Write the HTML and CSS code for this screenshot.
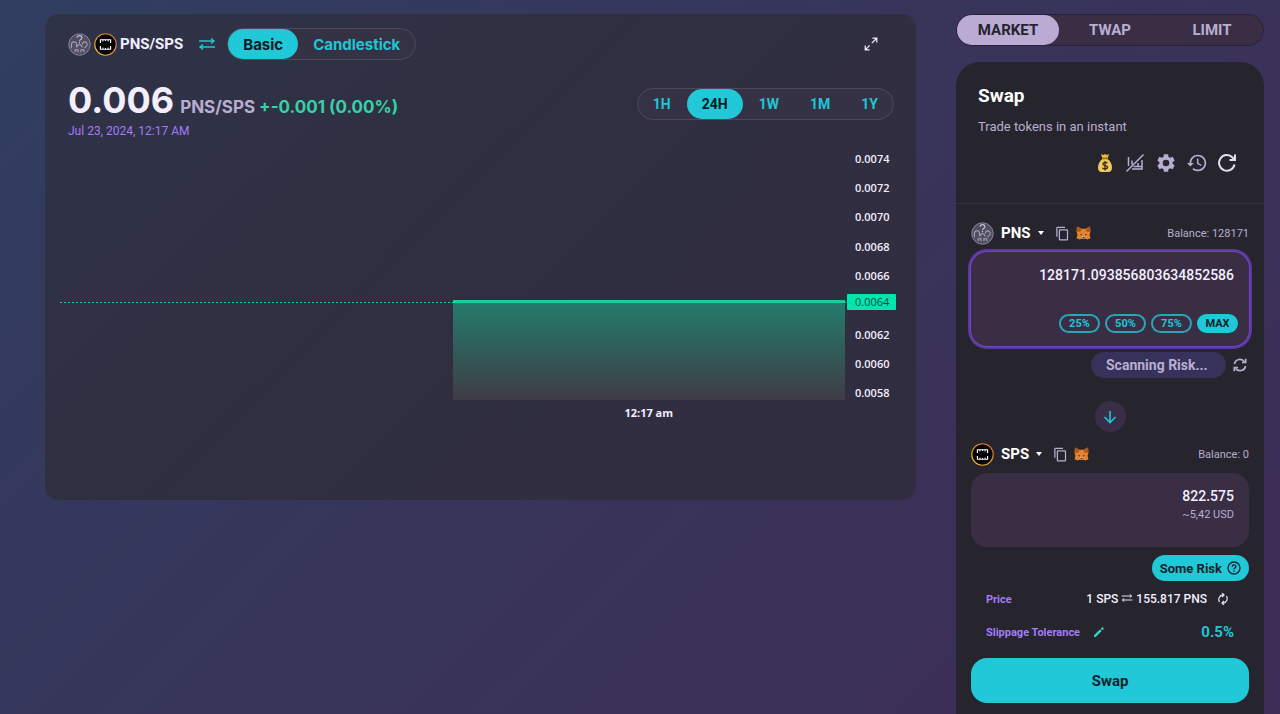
FILE: index.html
```html
<!DOCTYPE html>
<html lang="en">
<head>
  <meta charset="UTF-8">
  <meta name="viewport" content="width=device-width, initial-scale=1.0">
  <title>Swap PNS/SPS</title>
  <link rel="stylesheet" href="styles.css">
</head>
<body>
  <!-- shared icons -->
  <svg class="sprite" aria-hidden="true">
    <symbol id="pns" viewBox="0 0 24 24">
      <circle cx="12" cy="12" r="11.2" fill="#514e62" stroke="#8d889e" stroke-width="1"/>
      <g fill="none" stroke="#aaa4bb" stroke-width="1.100">
        <path d="M9.500 5c0-3 5-3 5 0 0 2-2.500 1.500-2.500 3.500M12 9.500v1.300" stroke="#c9c4d6"/>
        <path d="M3.500 16v-3.500c0-4.500 5.500-4.500 5.500-.5v3M15 12c0-4 5.500-3.500 5 .5-.3 1.500-2.500 1.500-2.500 3.500M9 15c1-2.500 2-3 3-3s2 .5 3 3"/>
        <path d="M7.500 20v-2.500h3V20M13.500 20v-2.500h3V20"/>
      </g>
    </symbol>
    <symbol id="sps" viewBox="0 0 24 24">
      <linearGradient id="ring" x1="1" y1="0" x2="0" y2="1"><stop offset="0" stop-color="#e06b2b"/><stop offset="1" stop-color="#f0c02c"/></linearGradient>
      <circle cx="12" cy="12" r="11.2" fill="#050507" stroke="url(#ring)" stroke-width="1.200"/>
      <path d="M6.700 10.500V7h10.600v3.500M6.700 13.500V17h10.600v-3.500" fill="none" stroke="#fff" stroke-width="1.200"/>
      <path d="M9.300 7v1.800M12 7v1.300M14.700 7v1.800M9.300 17v-1.800M12 17v-1.300M14.700 17v-1.800" stroke="#fff" stroke-width="1"/>
    </symbol>
    <symbol id="swap" viewBox="0 0 18 14">
      <path d="M1 4h15M13 1.500 16 4l-3 2.500M17 10H2M5 7.500 2 10l3 2.500" fill="none" stroke="currentColor" stroke-width="1.400"/>
    </symbol>
    <symbol id="copy" viewBox="0 0 24 24">
      <path d="M16 1H4a2 2 0 0 0-2 2v14h2V3h12V1zm3 4H8a2 2 0 0 0-2 2v14c0 1.100.9 2 2 2h11a2 2 0 0 0 2-2V7a2 2 0 0 0-2-2zm0 16H8V7h11v14z" fill="currentColor"/>
    </symbol>
    <symbol id="fox" viewBox="0 0 32 30">
      <path d="M2 1l10 5h8l10-5 1 10-2 8 2 7-7 3-5-2h-6l-5 2-7-3 2-7-2-8z" fill="#e8832a"/>
      <path d="M2 1l10 5-2 6-7 1-1-3zM30 1L20 6l2 6 7 1 1-3z" fill="#a85a20"/>
      <path d="M8 17l5 1-1 3zM24 17l-5 1 1 3z" fill="#2b303c"/>
      <path d="M12 22h8l-1 5h-6z" fill="#c9c0b8"/>
      <path d="M13.500 23.500h5l-1 2h-3z" fill="#22222c"/>
    </symbol>
  </svg>

  <div class="page">
    <main class="chart-card">
      <header class="chart-top">
        <div class="pair">
          <svg class="token-icon"><use href="#pns"/></svg>
          <svg class="token-icon"><use href="#sps"/></svg>
          <span>PNS/SPS</span>
        </div>
        <button class="icon-btn flip" aria-label="Flip pair"><svg width="18" height="14"><use href="#swap"/></svg></button>
        <div class="pills">
          <button class="active">Basic</button>
          <button>Candlestick</button>
        </div>
        <button class="icon-btn expand" aria-label="Expand chart">
          <svg width="14" height="14" viewBox="0 0 14 14" fill="none" stroke="currentColor" stroke-width="1.200"><path d="M8.500 1.200h4.300v4.300M12.500 1.500l-4.700 4.700M5.500 12.800H1.200V8.500M1.500 12.500l4.200-4.200"/></svg>
        </button>
      </header>

      <section class="summary">
        <div>
          <p class="price"><span class="amount">0.006</span><span class="unit">PNS/SPS</span><span class="change">+-0.001 (0.00%)</span></p>
          <p class="date">Jul 23, 2024, 12:17 AM</p>
        </div>
        <div class="pills range">
          <button>1H</button>
          <button class="active">24H</button>
          <button>1W</button>
          <button>1M</button>
          <button>1Y</button>
        </div>
      </section>

      <section class="chart">
        <div class="plot">
          <div class="area"></div>
          <span class="time">12:17 am</span>
        </div>
        <div class="axis">
          <span>0.0074</span>
          <span>0.0072</span>
          <span>0.0070</span>
          <span>0.0068</span>
          <span>0.0066</span>
          <span></span>
          <span>0.0062</span>
          <span>0.0060</span>
          <span>0.0058</span>
        </div>
        <div class="marker"><span>0.0064</span></div>
      </section>
    </main>

    <aside class="side">
      <nav class="modes">
        <button class="active">MARKET</button>
        <button>TWAP</button>
        <button>LIMIT</button>
      </nav>

      <div class="panel">
        <header class="panel-head">
          <h1>Swap</h1>
          <p>Trade tokens in an instant</p>
          <div class="tools">
            <button class="icon-btn" aria-label="Liquidity">
              <svg width="20" height="20" viewBox="0 0 20 20">
                <path d="M6 1l2.300 1L10 1l1.700 1L14 1l-1.200 4H7.200z" fill="#e9b83d"/>
                <path d="M7.500 6h5c2.500 2 4.500 4.500 4.500 8.500 0 3-1.500 4.500-3.500 4.500h-7C4.500 19 3 17.500 3 14.500 3 10.500 5 8 7.500 6z" fill="#f0c95c"/>
                <path d="M6.800 5.500h6.400" stroke="#9b6418" stroke-width="1.500"/>
                <path d="M12.500 10.200c-.6-1-4.700-1.300-4.700.8 0 2.200 4.800.9 4.800 3.200 0 2-4.200 1.900-5.200.6M10 8v9.500" fill="none" stroke="#3c2c18" stroke-width="1.300"/>
              </svg>
            </button>
            <button class="icon-btn" aria-label="Hide chart">
              <svg width="20" height="20" viewBox="0 0 20 20" fill="none" stroke="currentColor" stroke-width="1.500"><path d="M3.500 4v9M7 7.500v4M13 10v4M17 7v9H7M8.500 13.500H17M1.500 18.500l17-17"/></svg>
            </button>
            <button class="icon-btn" aria-label="Settings">
              <svg width="22" height="22" viewBox="0 0 24 24" fill="currentColor"><path d="M19.140 12.940c.04-.3.06-.61.06-.94s-.02-.64-.07-.94l2.030-1.580c.18-.14.23-.41.12-.61l-1.920-3.320c-.12-.22-.37-.29-.59-.22l-2.390.96c-.5-.38-1.030-.7-1.620-.94l-.36-2.540A.48.480 0 0 0 13.920 2.400h-3.840c-.24 0-.43.17-.47.41l-.36 2.540c-.59.24-1.130.57-1.620.94l-2.390-.96c-.22-.08-.47 0-.59.22L2.740 8.870c-.12.21-.08.47.12.61l2.030 1.580c-.05.3-.09.63-.09.94s.02.64.07.94l-2.030 1.580c-.18.14-.23.41-.12.61l1.920 3.320c.12.22.37.29.59.22l2.390-.96c.5.38 1.030.7 1.620.94l.36 2.540c.05.24.24.41.48.41h3.840c.24 0 .44-.17.47-.41l.36-2.540c.59-.24 1.130-.56 1.620-.94l2.390.96c.22.08.47 0 .59-.22l1.920-3.320c.12-.22.07-.47-.12-.61zM12 15.600a3.600 3.600 0 1 1 0-7.200 3.600 3.600 0 0 1 0 7.200z"/></svg>
            </button>
            <button class="icon-btn" aria-label="History">
              <svg width="20" height="20" viewBox="0 0 24 24" fill="currentColor"><path d="M13 2A10 10 0 0 0 3 12H0l4 4.200L8.200 12H5A8 8 0 1 1 7.800 18l-1.400 1.500A10 10 0 1 0 13 2zM12 7v5.800l4.800 2.900.9-1.400-4-2.400V7z"/></svg>
            </button>
            <button class="icon-btn light" aria-label="Refresh">
              <svg width="20" height="20" viewBox="0 0 20 20" fill="none" stroke="currentColor" stroke-width="2"><path d="M17.500 11.500A7.800 7.800 0 1 1 15.500 4.500l2 2"/><path d="M18 1.500V7h-5.500"/></svg>
            </button>
          </div>
        </header>

        <section class="trade">
          <div class="token-row">
            <button class="token"><svg class="token-icon"><use href="#pns"/></svg>PNS<i class="caret"></i></button>
            <button class="icon-btn" aria-label="Copy PNS address"><svg width="15" height="15"><use href="#copy"/></svg></button>
            <button class="icon-btn" aria-label="Add PNS to wallet"><svg width="15" height="14"><use href="#fox"/></svg></button>
            <span class="balance">Balance: 128171</span>
          </div>
          <div class="box box-in">
            <input type="text" aria-label="Amount of PNS" value="128171.093856803634852586">
            <div class="percents">
              <button>25%</button>
              <button>50%</button>
              <button>75%</button>
              <button class="active">MAX</button>
            </div>
          </div>

          <div class="scan">
            <span class="scan-pill">Scanning Risk...</span>
            <button class="icon-btn" aria-label="Scan again">
              <svg width="14" height="14" viewBox="0 0 14 14" fill="none" stroke="currentColor" stroke-width="1.700"><path d="M1.500 6A5.500 5.500 0 0 1 11.500 3.800M12.500 8a5.500 5.500 0 0 1-10 2.200"/><path d="M12.700.8v3.700H9M1.300 13.200V9.500H5"/></svg>
            </button>
          </div>

          <button class="switch" aria-label="Switch tokens">
            <svg width="14" height="14" viewBox="0 0 14 14" fill="none" stroke="currentColor" stroke-width="1.600"><path d="M7 1v11.500M1.500 7 7 12.500 12.500 7"/></svg>
          </button>

          <div class="token-row">
            <button class="token"><svg class="token-icon"><use href="#sps"/></svg>SPS<i class="caret"></i></button>
            <button class="icon-btn" aria-label="Copy SPS address"><svg width="15" height="15"><use href="#copy"/></svg></button>
            <button class="icon-btn" aria-label="Add SPS to wallet"><svg width="15" height="14"><use href="#fox"/></svg></button>
            <span class="balance">Balance: 0</span>
          </div>
          <div class="box box-out">
            <input type="text" aria-label="Amount of SPS" value="822.575">
            <p>~5,42 USD</p>
          </div>

          <button class="risk">Some Risk
            <svg width="14" height="14" viewBox="0 0 14 14" fill="none" stroke="currentColor" stroke-width="1.300"><circle cx="7" cy="7" r="6"/><path d="M5.200 5.700c0-2.500 3.700-2.300 3.700-.2C8.900 6.800 7 6.800 7 8.500M7 9.500v1.300"/></svg>
          </button>

          <div class="info">
            <span class="label">Price</span>
            <span class="rate">1 SPS <svg width="12" height="10"><use href="#swap"/></svg> 155.817 PNS</span>
            <button class="icon-btn light" aria-label="Invert price">
              <svg width="12" height="12" viewBox="0 0 12 12" fill="none" stroke="currentColor" stroke-width="1.300"><path d="M2.500 9A4.500 4.500 0 0 1 6 2M9.500 3A4.500 4.500 0 0 1 6 10"/><path d="M5 0l2 2-2 2M7 8l-2 2 2 2"/></svg>
            </button>
          </div>
          <div class="info">
            <span class="label">Slippage Tolerance</span>
            <button class="icon-btn edit" aria-label="Edit slippage">
              <svg width="10" height="10" viewBox="0 0 10 10" fill="currentColor"><path d="M0 8.300l6-6L7.700 4l-6 6H0zM6.700 1.600L8.300 0 10 1.700 8.400 3.300z"/></svg>
            </button>
            <span class="slippage">0.5%</span>
          </div>
          <button class="submit">Swap</button>
        </section>
      </div>
    </aside>
  </div>
</body>
</html>
```
FILE: styles.css
```css
* {
  box-sizing: border-box;
}

body {
  margin: 0;
  font-family: Roboto, "Liberation Sans", sans-serif;
  color: #f4eeff;
  background: linear-gradient(135deg, #303e60 0%, #38345a 50%, #3e2d56 100%);
}

h1, p {
  margin: 0;
}

button, input {
  font-family: inherit;
  padding: 0;
  border: none;
  background: none;
}

button {
  cursor: pointer;
}

.sprite {
  position: absolute;
  width: 0;
  height: 0;
}

.page {
  display: flex;
  gap: 40px;
  min-height: 100vh;
  padding: 14px 16px 0 45px;
}

.icon-btn {
  display: flex;
  color: #b8aed2;
}

.icon-btn.light {
  color: #e4dff0;
}

.token-icon {
  width: 23px;
  height: 23px;
}

/* chart card */
.chart-card {
  flex: 1;
  align-self: flex-start;
  height: 486px;
  padding: 14px 20px 0 15px;
  border-radius: 14px;
  background: linear-gradient(135deg, #2f3347, #302e41 50%, #302d40);
}

.chart-top {
  display: flex;
  align-items: center;
  padding: 0 18px 0 8px;
}

.pair {
  display: flex;
  align-items: center;
  gap: 3px;
  font-size: 15px;
  font-weight: 700;
}

.flip {
  margin: 0 11px 0 15px;
  color: #20c5d6;
}

.icon-btn.expand {
  margin-left: auto;
  color: #f4eeff;
}

.pills {
  display: flex;
  height: 32px;
  border: 1px solid #4b495c;
  border-radius: 16px;
  background: #343244;
}

.pills button {
  padding: 0 15px;
  border-radius: 16px;
  font-family: Inter, sans-serif;
  font-size: 15px;
  font-weight: 700;
  color: #20c5d6;
}

.pills .active {
  background: #20c8d8;
  color: #0d1a22;
}

.summary {
  display: flex;
  justify-content: space-between;
  padding: 23px 2px 0 8px;
}

.price {
  display: flex;
  align-items: baseline;
  font-family: Inter, sans-serif;
  font-weight: 700;
  line-height: 34px;
}

.amount {
  margin-right: 6px;
  font-size: 36px;
}

.unit {
  margin-right: 4px;
  font-size: 17px;
  color: #b8aed2;
}

.change {
  font-size: 17px;
  color: #38d0a8;
}

.date {
  font-size: 12px;
  line-height: 14px;
  color: #a47bfa;
}

.range {
  gap: 1px;
  margin-top: 5px;
}

.range button {
  font-family: Roboto, sans-serif;
  font-size: 14px;
}

.chart {
  position: relative;
  display: flex;
  height: 282px;
  margin-top: 6px;
}

.plot {
  display: grid;
  flex: 1;
  grid-template-columns: 1fr 1fr;
  grid-template-rows: 100px 26px;
  align-content: end;
}

.area {
  grid-column: 2;
  border-top: 3px solid #16cf9c;
  background: linear-gradient(#257b6c, #315b58 50%, #403c47);
}

.time {
  grid-column: 2;
  font: 700 11px/26px "Open Sans", sans-serif;
  text-align: center;
}

.axis {
  display: grid;
  grid-template-rows: repeat(9, 1fr);
  align-items: center;
  width: 51px;
  height: 264px;
  padding-left: 10px;
  font: 600 11px/14px "Open Sans", sans-serif;
}

.marker {
  position: absolute;
  top: 150px;
  left: 0;
  right: 0;
  display: flex;
  align-items: center;
}

.marker::before {
  content: "";
  flex: 1;
  height: 1px;
  background: repeating-linear-gradient(90deg, #20cfa8 0 2px, transparent 2px 4px);
}

.marker span {
  width: 49px;
  padding-left: 8px;
  border-radius: 1px;
  background: #00e6ad;
  color: #14483f;
  font: 500 11px/16px "Open Sans", sans-serif;
}

/* right column */
.side {
  display: flex;
  flex-direction: column;
  gap: 16px;
  width: 308px;
}

.modes {
  display: grid;
  grid-template-columns: repeat(3, 1fr);
  height: 32px;
  border: 1px solid #28233a;
  border-radius: 16px;
  background: #392e44;
}

.modes button {
  border-radius: 16px;
  font-size: 15px;
  font-weight: 700;
  color: #b8aed2;
}

.modes .active {
  background: #b9abd4;
  color: #26242c;
}

.panel {
  flex: 1;
  border-radius: 24px 24px 0 0;
  background: #26242c;
}

.panel-head {
  height: 142px;
  padding: 22px;
  border-bottom: 1px solid #36343e;
}

.panel-head h1 {
  font-size: 19px;
  line-height: 24px;
  color: #fff;
}

.panel-head p {
  margin-top: 10px;
  font-size: 13px;
  line-height: 18px;
  color: #b8aed2;
}

.tools {
  display: flex;
  align-items: center;
  justify-content: flex-end;
  gap: 10px;
  margin-top: 16px;
  padding-right: 5px;
}

.trade {
  display: flex;
  flex-direction: column;
  padding: 17px 15px 11px;
}

.token-row {
  display: flex;
  align-items: center;
  gap: 6px;
  height: 24px;
}

.token {
  display: flex;
  align-items: center;
  gap: 7px;
  margin-right: 5px;
  font-size: 15px;
  font-weight: 700;
  color: #fff;
}

.caret {
  border: 3px solid transparent;
  border-top: 4px solid #fff;
  border-bottom: 0;
}

.balance {
  margin-left: auto;
  font-size: 11px;
  color: #b8aed2;
}

.box {
  border-radius: 16px;
  background: #392e44;
  text-align: right;
}

.box input {
  width: 100%;
  height: 20px;
  outline: none;
  text-align: right;
  font-size: 14px;
  font-weight: 500;
  color: #f4eeff;
}

.box-in {
  height: 94px;
  margin-top: 7px;
  padding: 13px 15px;
  box-shadow: 0 0 0 1px #7446c4, 0 0 0 3px #5a39a4;
}

.percents {
  display: flex;
  justify-content: flex-end;
  gap: 5px;
  margin: 29px -4px 0 0;
}

.percents button {
  width: 41px;
  height: 19px;
  border: 2px solid #2aa5b8;
  border-radius: 10px;
  font-size: 11px;
  font-weight: 700;
  line-height: 15px;
  color: #20c5d6;
}

.percents .active {
  border-color: #20c8d8;
  background: #20c8d8;
  color: #12242c;
}

.scan {
  display: flex;
  align-items: center;
  justify-content: flex-end;
  gap: 7px;
  margin-top: 6px;
  padding-right: 2px;
}

.scan-pill {
  width: 135px;
  padding-left: 15px;
  border-radius: 13px;
  background: #373259;
  font-size: 14px;
  font-weight: 700;
  line-height: 26px;
  color: #b8aed2;
}

.switch {
  display: flex;
  align-items: center;
  justify-content: center;
  align-self: center;
  width: 31px;
  height: 31px;
  margin: 23px 0 10px;
  border-radius: 50%;
  background: #392e48;
  color: #20c5d6;
}

.box-out {
  height: 74px;
  margin-top: 7px;
  padding: 13px 15px;
}

.box-out p {
  font-size: 11px;
  line-height: 18px;
  color: #b8aed2;
}

.risk {
  display: flex;
  align-items: center;
  align-self: flex-end;
  gap: 5px;
  height: 26px;
  margin: 8px 0 3px;
  padding: 0 8px;
  border-radius: 13px;
  background: #20c8d8;
  font-size: 13px;
  font-weight: 700;
  color: #12242c;
}

.info {
  display: flex;
  align-items: center;
  height: 30px;
  margin-bottom: 3px;
  padding: 0 15px;
}

.label {
  font-size: 11px;
  font-weight: 700;
  color: #a47bfa;
}

.rate {
  margin: 0 10px 0 auto;
  font-size: 12px;
  font-weight: 500;
}

.info .light {
  margin-right: 5px;
}

.icon-btn.edit {
  margin-left: 14px;
  color: #38d0c0;
}

.slippage {
  margin-left: auto;
  font-size: 15px;
  font-weight: 700;
  color: #20c5d6;
}

.submit {
  height: 45px;
  margin-top: 8px;
  border-radius: 16px;
  background: #20c8d8;
  font-size: 15px;
  font-weight: 700;
  color: #12242c;
}
```
